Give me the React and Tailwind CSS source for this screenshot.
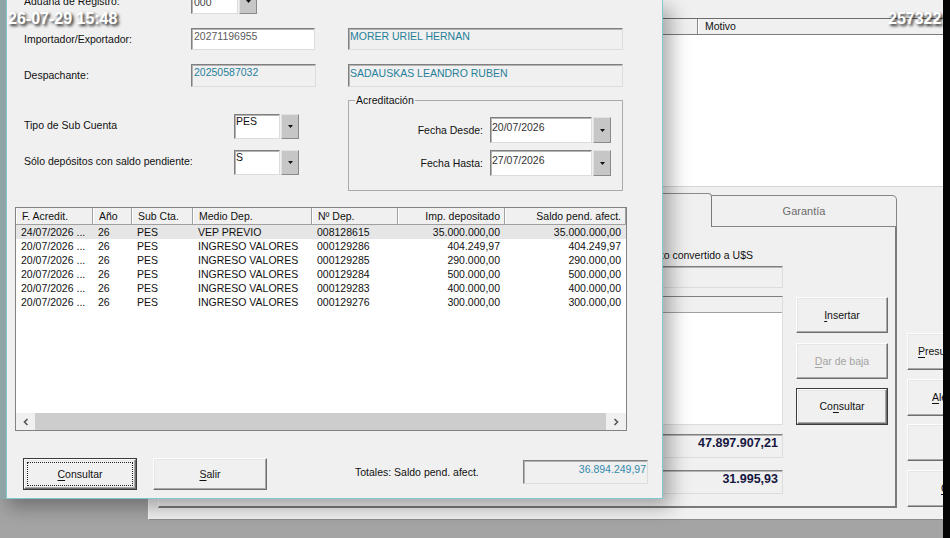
import React from "react";

// bordes estilo Windows clásico
const SUNKEN =
  "border border-t-[#7f7f7f] border-l-[#7f7f7f] border-r-[#dcdcdc] border-b-[#dcdcdc] shadow-[inset_1px_1px_0_#b4b4b4]";
const RAISED =
  "border border-t-[#fdfdfd] border-l-[#fdfdfd] border-r-[#6e6e6e] border-b-[#6e6e6e] shadow-[inset_-1px_-1px_0_#a8a8a8,inset_1px_1px_0_#e6e6e6]";

const COLUMNS = [
  { label: "F. Acredit.", w: "w-[77px]", right: false },
  { label: "Año", w: "w-[39px]", right: false },
  { label: "Sub Cta.", w: "w-[61px]", right: false },
  { label: "Medio Dep.", w: "w-[119px]", right: false },
  { label: "Nº Dep.", w: "w-[86px]", right: false },
  { label: "Imp. depositado", w: "w-[107px]", right: true },
  { label: "Saldo pend. afect.", w: "w-[121px]", right: true },
];

const ROWS = [
  ["24/07/2026 ...", "26", "PES", "VEP PREVIO", "008128615", "35.000.000,00", "35.000.000,00"],
  ["20/07/2026 ...", "26", "PES", "INGRESO VALORES", "000129286", "404.249,97", "404.249,97"],
  ["20/07/2026 ...", "26", "PES", "INGRESO VALORES", "000129285", "290.000,00", "290.000,00"],
  ["20/07/2026 ...", "26", "PES", "INGRESO VALORES", "000129284", "500.000,00", "500.000,00"],
  ["20/07/2026 ...", "26", "PES", "INGRESO VALORES", "000129283", "400.000,00", "400.000,00"],
  ["20/07/2026 ...", "26", "PES", "INGRESO VALORES", "000129276", "300.000,00", "300.000,00"],
];

function Key({ children }) {
  return <span className="underline underline-offset-[2px]">{children}</span>;
}

function DropButton() {
  return (
    <div className="ml-[1px] w-[18px] h-full flex items-center justify-center bg-[#c6c6c6] border border-t-[#e2e2e2] border-l-[#e2e2e2] border-r-[#8a8a8a] border-b-[#8a8a8a]">
      <svg width="5" height="3" viewBox="0 0 5 3">
        <path d="M0 0 H5 L2.5 3 Z" fill="#111" />
      </svg>
    </div>
  );
}

function Chevron({ dir }) {
  return (
    <svg width="6" height="8" viewBox="0 0 6 8">
      <path
        d={dir === "left" ? "M4.5 1 L1.5 4 L4.5 7" : "M1.5 1 L4.5 4 L1.5 7"}
        fill="none"
        stroke="#555"
        strokeWidth="1.6"
      />
    </svg>
  );
}

function BackWindow() {
  return (
    <div className="absolute left-[148px] top-0 w-[795px] h-[520px] overflow-hidden bg-[#f0f0f0] border-l border-l-[#fafafa] border-b border-b-[#8c8c8c] flex flex-col">
      {/* lista superior */}
      <div className="mt-[18px] ml-[9px] w-[800px] h-[169px] flex flex-col border-t border-t-[#6c6c6c] border-l border-l-[#6c6c6c] bg-white">
        <div className="h-[16px] flex border-b border-b-[#7c7c7c] bg-[#f0f0f0]">
          <div className="w-[539px] border-r border-r-[#8a8a8a]" />
          <div className="flex-1 pl-[6px] flex items-center border-l border-l-white">Motivo</div>
        </div>
        <div className="flex-1 bg-white border-b border-b-[#d4d4d4]" />
      </div>

      <div className="mt-[6px] ml-[9px] flex items-start">
        {/* pestañas */}
        <div className="w-[739px] h-[315px] shrink-0 flex flex-col">
          <div className="h-[34px] flex items-end">
            <div className="w-[554px] h-[34px] border-t border-l border-r border-t-[#8a8a8a] border-l-white border-r-[#7a7a7a] rounded-t-[4px] bg-[#f0f0f0]" />
            <div className="w-[185px] h-[32px] flex items-center justify-center border-t border-r border-b border-[#858585] rounded-tr-[5px] text-[11px] text-[#6c6c6c]">
              Garantía
            </div>
          </div>
          <div className="flex-1 flex items-start border-l border-l-white border-r-2 border-b-2 border-r-[#7a7a7a] border-b-[#7a7a7a]">
            <div className="ml-[10px] mt-[22px] w-[614px] flex flex-col">
              <div className="h-[13px] pr-[30px] text-right">Monto convertido a U$S</div>
              <div className={`mt-[4px] h-[22px] bg-[#f0f0f0] ${SUNKEN}`} />
              <div className={`mt-[8px] h-[129px] flex flex-col bg-white ${SUNKEN}`}>
                <div className="h-[16px] bg-[#f0f0f0] border-b border-b-[#a0a0a0]" />
                <div className="flex-1" />
              </div>
              <div className={`mt-[9px] h-[24px] pr-[4px] pt-[1px] text-right text-[12.5px] leading-[14px] font-bold text-[#161640] bg-[#f0f0f0] ${SUNKEN}`}>
                47.897.907,21
              </div>
              <div className={`mt-[12px] h-[24px] pr-[4px] pt-[1px] text-right text-[12.5px] leading-[14px] font-bold text-[#161640] bg-[#f0f0f0] ${SUNKEN}`}>
                31.995,93
              </div>
            </div>
            <div className="ml-[13px] mt-[70px] w-[92px] flex flex-col">
              <div className={`h-[36px] flex items-center justify-center ${RAISED}`}>
                <span><Key>I</Key>nsertar</span>
              </div>
              <div className={`mt-[10px] h-[36px] flex items-center justify-center text-[#a3a3a3] ${RAISED}`}>
                <span><Key>D</Key>ar de baja</span>
              </div>
              <div className="mt-[9px] h-[37px] flex border border-[#3c3c3c]">
                <div className={`flex-1 flex items-center justify-center ${RAISED}`}>
                  <span>Co<Key>n</Key>sultar</span>
                </div>
              </div>
            </div>
          </div>
        </div>

        {/* botones laterales */}
        <div className="ml-[10px] mt-[140px] w-[82px] shrink-0 flex flex-col">
          <div className={`h-[37px] pl-[10px] flex items-center whitespace-nowrap ${RAISED}`}>
            <span><Key>P</Key>resupuesto</span>
          </div>
          <div className={`mt-[9px] h-[37px] pl-[24px] flex items-center whitespace-nowrap ${RAISED}`}>
            <span><Key>A</Key>lertas</span>
          </div>
          <div className={`mt-[8px] h-[37px] ${RAISED}`} />
          <div className={`mt-[9px] h-[37px] pl-[33px] flex items-center whitespace-nowrap ${RAISED}`}>
            <span><Key>C</Key>errar</span>
          </div>
        </div>
      </div>
    </div>
  );
}

function Dialog() {
  return (
    <div className="absolute left-0 top-0 w-[663px] h-[499px] border-l-[6px] border-l-[#8ea4a7] shadow-[8px_8px_18px_rgba(0,0,0,0.32)]">
      <div className="h-full bg-[#f0f0f0] border-l border-r border-b border-[#84c8cf] flex flex-col">
        {/* Aduana */}
        <div className="-mt-[11px] h-[25px] flex items-center">
          <span className="w-[184px] pl-[17px]">Aduana de Registro:</span>
          <div className="h-full flex">
            <div className={`w-[47px] h-full bg-white pl-[2px] pt-[6px] text-[#444] ${SUNKEN}`}>000</div>
            <DropButton />
          </div>
        </div>

        {/* Importador */}
        <div className="mt-[14px] h-[22px] flex items-center">
          <span className="w-[184px] pl-[17px]">Importador/Exportador:</span>
          <div className={`w-[124px] h-full bg-white pl-[2px] pt-[1px] leading-[12px] text-[#5c5c5c] ${SUNKEN}`}>20271196955</div>
          <div className={`ml-[33px] w-[275px] h-full bg-[#f0f0f0] pl-[1px] pt-[1px] leading-[12px] text-[#27809a] ${SUNKEN}`}>
            MORER URIEL HERNAN
          </div>
        </div>

        {/* Despachante */}
        <div className="mt-[14px] h-[23px] flex items-center">
          <span className="w-[184px] pl-[17px]">Despachante:</span>
          <div className={`w-[125px] h-full bg-[#f0f0f0] pl-[2px] pt-[1px] leading-[12px] text-[#27809a] ${SUNKEN}`}>20250587032</div>
          <div className={`ml-[32px] w-[275px] h-full bg-[#f0f0f0] pl-[1px] pt-[2px] leading-[12px] text-[#27809a] ${SUNKEN}`}>
            SADAUSKAS LEANDRO RUBEN
          </div>
        </div>

        {/* Sub cuenta + acreditación */}
        <div className="mt-[7px] flex items-start">
          <div className="w-[341px] flex flex-col">
            <div className="mt-[20px] h-[25px] flex items-center">
              <span className="w-[227px] pl-[17px] -mt-[2px]">Tipo de Sub Cuenta</span>
              <div className={`w-[46px] h-full bg-white pl-[1px] leading-[12px] ${SUNKEN}`}>PES</div>
              <DropButton />
            </div>
            <div className="mt-[11px] h-[25px] flex items-center">
              <span className="w-[227px] pl-[17px] -mt-[2px]">Sólo depósitos con saldo pendiente:</span>
              <div className={`w-[46px] h-full bg-white pl-[1px] leading-[12px] ${SUNKEN}`}>S</div>
              <DropButton />
            </div>
          </div>
          <fieldset className="w-[275px] h-[97px] border border-[#ababab] flex flex-col">
            <legend className="ml-[6px] px-[1px]">Acreditación</legend>
            <div className="mt-[10px] h-[26px] flex items-center">
              <span className="w-[141px] pr-[7px] text-right">Fecha Desde:</span>
              <div className={`w-[102px] h-full bg-white pl-[1px] pt-[3px] leading-[12px] text-[#333] ${SUNKEN}`}>20/07/2026</div>
              <DropButton />
            </div>
            <div className="mt-[7px] h-[26px] flex items-center">
              <span className="w-[141px] pr-[7px] text-right">Fecha Hasta:</span>
              <div className={`w-[102px] h-full bg-white pl-[1px] pt-[3px] leading-[12px] text-[#333] ${SUNKEN}`}>27/07/2026</div>
              <DropButton />
            </div>
          </fieldset>
        </div>

        {/* Lista de depósitos */}
        <div className="mt-[16px] ml-[8px] w-[612px] h-[224px] flex flex-col bg-white border border-[#828282]">
          <div className="h-[17px] flex bg-[#f0f0f0] border-b border-b-[#a0a0a0]">
            {COLUMNS.map((c) => (
              <div
                key={c.label}
                className={`${c.w} h-full flex items-center border-r border-r-[#a0a0a0] border-l border-l-white ${
                  c.right ? "justify-end pr-[4px]" : "pl-[5px]"
                }`}
              >
                {c.label}
              </div>
            ))}
          </div>
          <div className="flex-1 flex flex-col">
            {ROWS.map((r, i) => (
              <div key={i} className={`h-[14px] flex items-center ${i === 0 ? "bg-[#e6e6e6]" : ""}`}>
                {r.map((v, j) => (
                  <div
                    key={j}
                    className={`${COLUMNS[j].w} whitespace-nowrap overflow-hidden ${
                      COLUMNS[j].right ? "text-right pr-[5px]" : "pl-[5px]"
                    }`}
                  >
                    {v}
                  </div>
                ))}
              </div>
            ))}
          </div>
          <div className="h-[17px] flex bg-[#f0f0f0]">
            <div className="w-[19px] flex items-center justify-center">
              <Chevron dir="left" />
            </div>
            <div className="flex-1 bg-[#cdcdcd]" />
            <div className="w-[20px] flex items-center justify-center">
              <Chevron dir="right" />
            </div>
          </div>
        </div>

        {/* botones y totales */}
        <div className="mt-[27px] h-[32px] flex items-start">
          <div className="ml-[16px] w-[114px] h-[32px] flex border border-[#3a3a3a]">
            <div className={`flex-1 flex ${RAISED}`}>
              <div className="flex-1 m-[2px] flex items-center justify-center border border-dotted border-[#222]">
                <span><Key>C</Key>onsultar</span>
              </div>
            </div>
          </div>
          <div className={`ml-[16px] w-[114px] h-[32px] flex items-center justify-center ${RAISED}`}>
            <span><Key>S</Key>alir</span>
          </div>
          <span className="ml-[88px] w-[168px] mt-[8px]">Totales: Saldo pend. afect.</span>
          <div className={`mt-[2px] w-[125px] h-[24px] bg-[#f0f0f0] pr-[1px] pt-[2px] text-right leading-[12px] text-[#3389ab] ${SUNKEN}`}>
            36.894.249,97
          </div>
        </div>
      </div>
    </div>
  );
}

export default function App() {
  return (
    <div className="relative w-[950px] h-[538px] overflow-hidden bg-[#a4a4a4] font-['Liberation_Sans',Arial,sans-serif] text-[10.5px] leading-[13px] text-[#111]">
      <BackWindow />
      <Dialog />
      <div className="absolute left-[8px] top-[10px] text-[16px] leading-[18px] font-bold text-white [text-shadow:2px_2px_3px_rgba(0,0,0,0.85)]">
        26-07-29 15:48
      </div>
      <div className="absolute left-[888px] top-[10px] text-[16px] leading-[18px] font-bold text-white [text-shadow:2px_2px_3px_rgba(0,0,0,0.85)]">
        257322
      </div>
      <div className="absolute right-0 top-0 w-[7px] h-full bg-[#050505]" />
    </div>
  );
}
